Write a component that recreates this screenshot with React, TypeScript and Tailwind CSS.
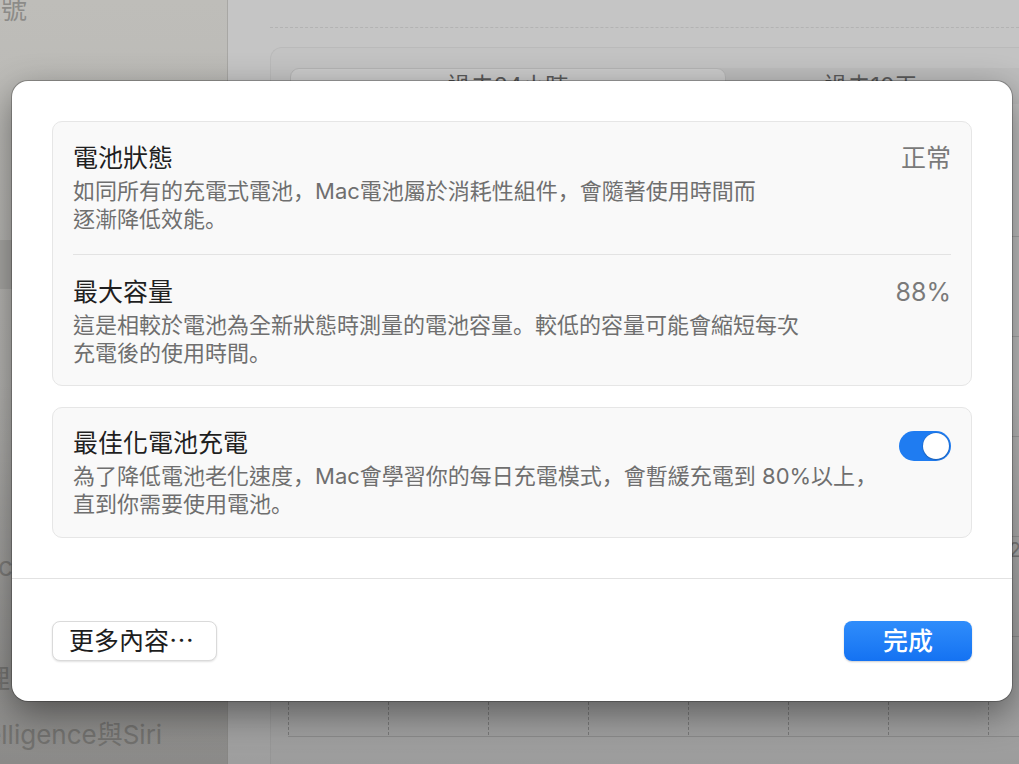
import React from "react";

// Full-width punctuation set low-left, the way the system font draws it.
function P({ c }: { c: string }) {
  return <span className="font-['Noto_Sans_CJK_JP',sans-serif]">{c}</span>;
}

function Sidebar() {
  return (
    <div className="flex h-full w-[228px] shrink-0 flex-col overflow-hidden border-r border-[#a8a7a4] bg-gradient-to-b from-[#bebdb9] to-[#adacaa] text-[26px] leading-[26px] text-[#8c8b88]">
      <div className="-mt-[3px] -ml-[25px] whitespace-nowrap">帳號</div>
      <div className="mt-[217px] h-[49px] w-[216px] shrink-0 rounded-r-[8px] bg-[#a9a8a5]" />
      <div className="mt-[265px] -ml-[40px] whitespace-nowrap">Mac</div>
      <div className="mt-[86px] -ml-[42px] whitespace-nowrap">管理</div>
      <div className="mt-[30px] -ml-[123px] whitespace-nowrap">Apple Intelligence與Siri</div>
    </div>
  );
}

function Main() {
  const cols = [0, 1, 2, 3, 4, 5, 6, 7];
  const rows = [0, 1, 2, 3, 4, 5];
  return (
    <div className="flex h-full flex-1 flex-col overflow-hidden bg-[#c5c5c5]">
      <div className="ml-[42px] mt-[27px] border-t border-dashed border-[#b3b3b3]" />
      <div className="ml-[42px] mt-[19px] flex flex-1 flex-col rounded-tl-[12px] border-l border-t border-[#bababa] bg-[#c3c3c3]">
        {/* range picker */}
        <div className="ml-[19px] mt-[20px] flex h-[36px] items-center rounded-l-[10px] bg-[#bdbdbd]">
          <div className="flex h-full w-[436px] items-center justify-center rounded-[9px] border border-[#b5b5b5] bg-[#cbcbcb] text-[23px] text-[#5a5a5a]">
            過去24小時
          </div>
          <div className="flex h-full w-[290px] items-center justify-center text-[23px] text-[#5a5a5a]">過去10天</div>
        </div>
        {/* usage chart grid */}
        <div className="ml-[17px] mt-[33px] flex flex-1 flex-col">
          <div className="relative flex flex-1">
            {cols.map((c) => (
              <div key={c} className="h-full w-[100px] shrink-0 border-l border-dashed border-[#949494]" />
            ))}
            <div className="absolute inset-0 flex flex-col">
              {rows.map((r) => (
                <div key={r} className="h-[100px] shrink-0 border-b border-[#a9a9a9]" />
              ))}
            </div>
            <div className="absolute right-[-14px] top-[398px] text-[20px] text-[#8c8c8c]">25</div>
          </div>
          <div className="h-[29px]" />
        </div>
      </div>
    </div>
  );
}

function Row({
  title,
  lines,
  right,
  pt,
  pb,
}: {
  title: string;
  lines: React.ReactNode[];
  right: React.ReactNode;
  pt: string;
  pb: string;
}) {
  return (
    <div className={`flex items-start justify-between px-5 ${pt} ${pb}`}>
      <div className="flex flex-col">
        <div className="flex h-[32px] items-center text-[25px] leading-[32px] text-[#1f1f1f]">{title}</div>
        <div className="mt-[3px] flex flex-col text-[22px] leading-[27px] text-[#6f6f6f]">
          {lines.map((l, i) => (
            <div key={i} className="flex h-[27.5px] items-center whitespace-nowrap">
              <span>{l}</span>
            </div>
          ))}
        </div>
      </div>
      {right}
    </div>
  );
}

function Value({ text }: { text: string }) {
  return <div className="flex h-[32px] items-center text-[25px] leading-[32px] text-[#7a7a7a]">{text}</div>;
}

function Toggle() {
  return (
    <div className="mt-[4px] flex h-[30px] w-[52px] items-center justify-end rounded-full bg-[#1f7cf1] px-[2px]">
      <div className="h-[26px] w-[26px] rounded-full bg-white shadow-[0_0_0_0.5px_rgba(0,0,0,0.15),0_1px_2px_rgba(0,0,0,0.2)]" />
    </div>
  );
}

function Dialog() {
  return (
    <div className="absolute left-[12px] top-[81px] w-[1000px] rounded-[16px] bg-white shadow-[0_0_0_1px_rgba(0,0,0,0.24),0_12px_36px_rgba(0,0,0,0.45)]">
      <div className="flex flex-col gap-[21px] p-10">
        <div className="rounded-[10px] border border-[#e6e6e6] bg-[#f9f9f9]">
          <Row
            title="電池狀態"
            pt="pt-5"
            pb="pb-[22px]"
            right={<Value text="正常" />}
            lines={[
              <>
                如同所有的充電式電池<P c="，" />Mac電池屬於消耗性組件<P c="，" />會隨著使用時間而
              </>,
              <>
                逐漸降低效能<P c="。" />
              </>,
            ]}
          />
          <div className="mx-5 h-px bg-[#e3e3e3]" />
          <Row
            title="最大容量"
            pt="pt-[21px]"
            pb="pb-[19px]"
            right={<Value text="88%" />}
            lines={[
              <>
                這是相較於電池為全新狀態時測量的電池容量<P c="。" />較低的容量可能會縮短每次
              </>,
              <>
                充電後的使用時間<P c="。" />
              </>,
            ]}
          />
        </div>
        <div className="rounded-[10px] border border-[#e6e6e6] bg-[#f9f9f9]">
          <Row
            title="最佳化電池充電"
            pt="pt-[19px]"
            pb="pb-5"
            right={<Toggle />}
            lines={[
              <>
                為了降低電池老化速度<P c="，" />Mac會學習你的每日充電模式<P c="，" />會暫緩充電到 80%以上<P c="，" />
              </>,
              <>
                直到你需要使用電池<P c="。" />
              </>,
            ]}
          />
        </div>
      </div>
      <div className="h-px bg-[#e2e2e2]" />
      <div className="flex items-center justify-between px-10 pb-10 pt-[42px]">
        <button className="flex h-[40px] w-[165px] items-center rounded-[8px] border border-[#dadada] bg-white px-4 text-[25px] leading-[32px] text-[#1d1d1d] shadow-[0_1px_2px_rgba(0,0,0,0.12)]">
          更多內容⋯
        </button>
        <button className="flex h-[40px] w-[128px] items-center justify-center rounded-[8px] bg-gradient-to-b from-[#2f8dfb] to-[#1472f2] text-[25px] font-medium leading-[32px] text-white shadow-[0_1px_2px_rgba(0,0,0,0.2)]">
          完成
        </button>
      </div>
    </div>
  );
}

export default function App() {
  return (
    <div className="relative h-[764px] w-[1019px] overflow-hidden bg-[#c4c4c4] font-['Inter','Noto_Sans_CJK_TC',sans-serif]">
      <div className="flex h-full">
        <Sidebar />
        <Main />
      </div>
      <div className="pointer-events-none absolute inset-0 bg-gradient-to-b from-transparent via-transparent to-black/20" />
      <Dialog />
    </div>
  );
}
